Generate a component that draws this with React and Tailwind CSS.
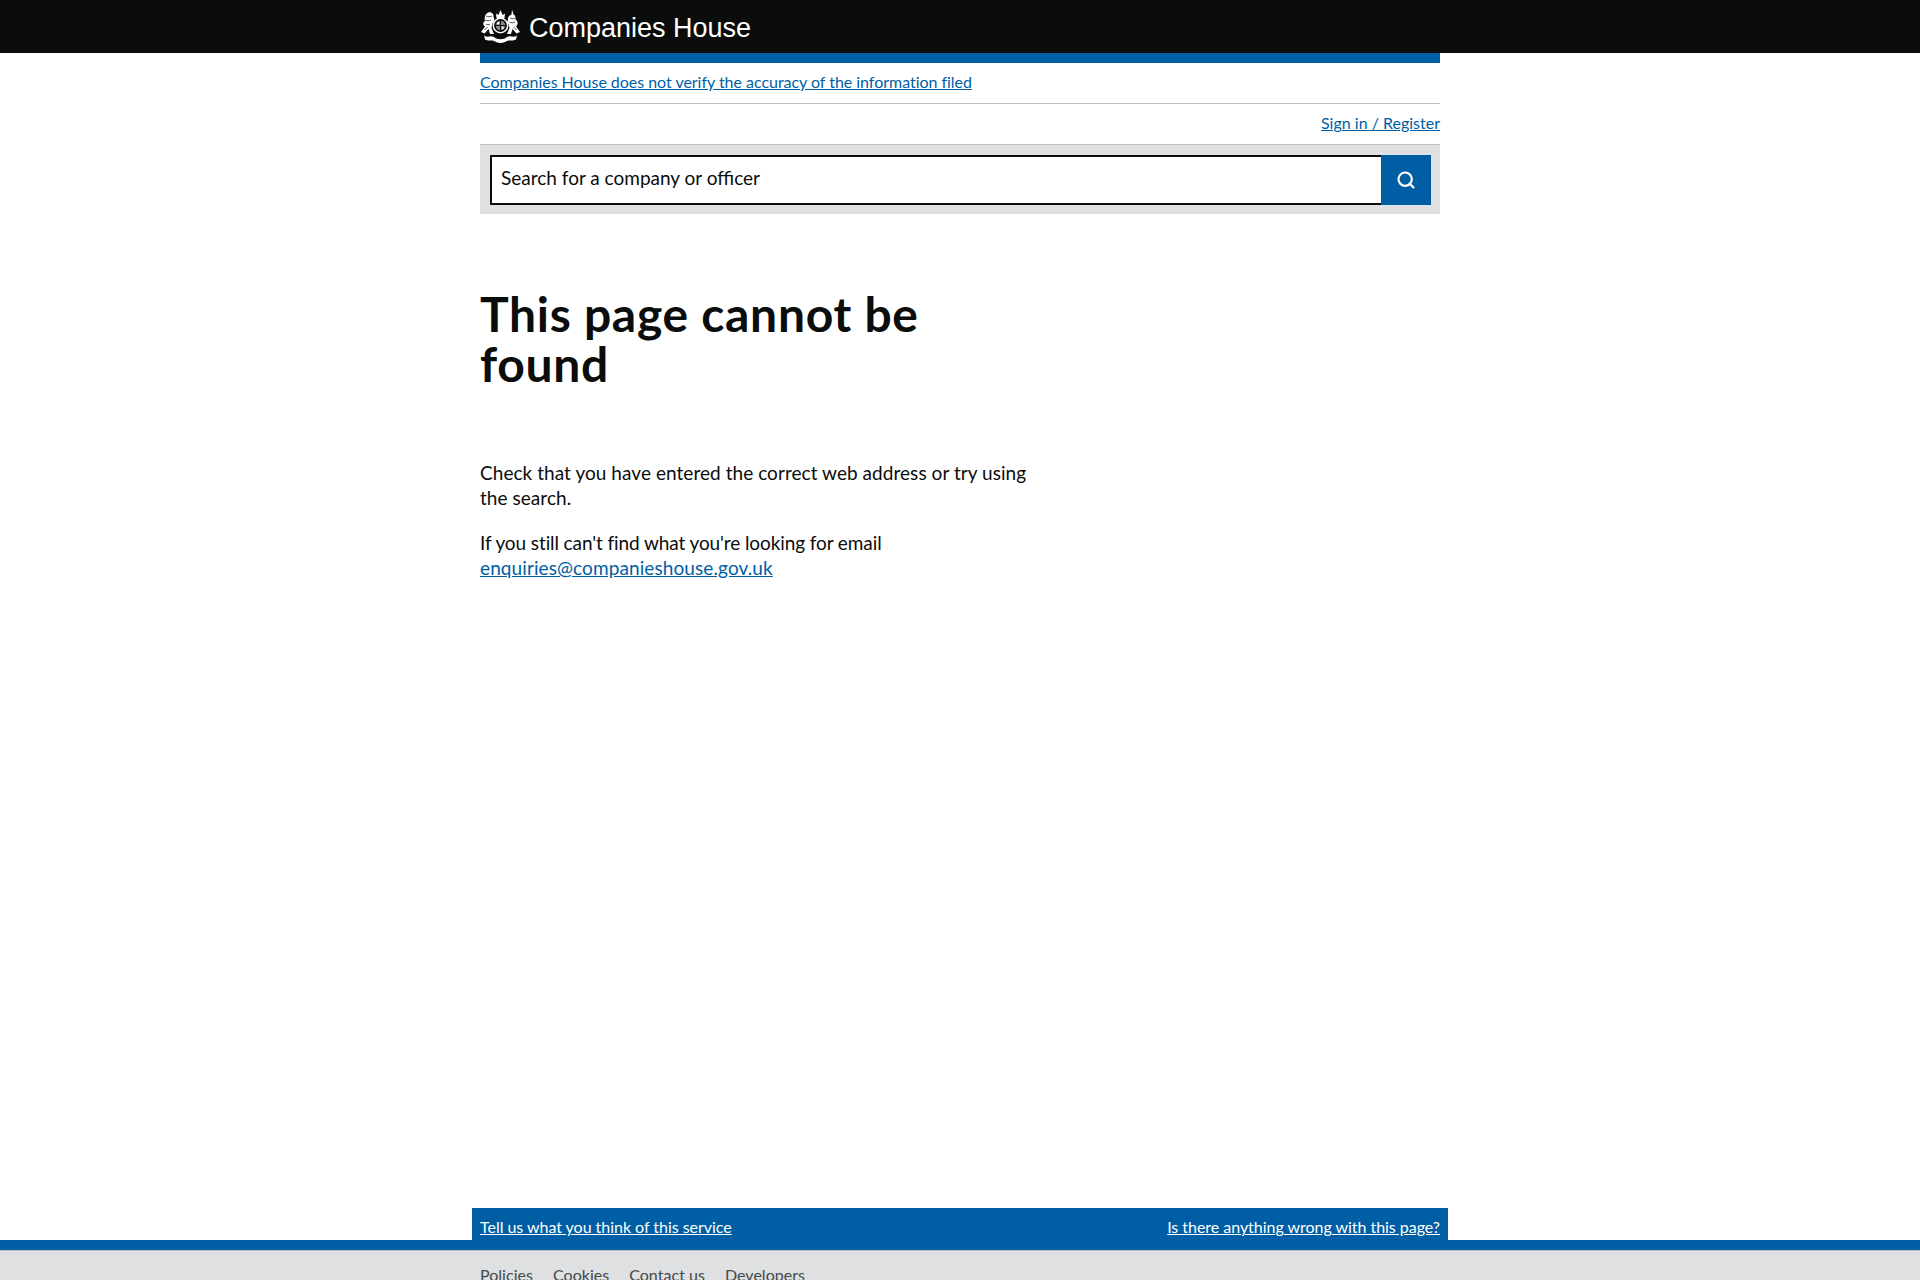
import { Search } from 'lucide-react';

function Crest() {
  return (
    <svg width="41" height="35" viewBox="0 0 41 35" fill="none" className="shrink-0">
      {/* crown */}
      <path d="M16.5 9 L16 4.5 L18.3 6 L20.5 1 L22.7 6 L25 4.5 L24.5 9 Z" fill="#fff" />
      {/* lion */}
      <path d="M8 3.5 C11 2.5 14 4.5 13.5 8 C15 10 14.5 13 12.5 14 L11.5 19 L14 25 L10 25 L8.5 20 L4.5 24.5 L1 23 L5 17.5 C2.5 15.5 3 13 5 12 C4 9 5 5 8 3.5 Z" fill="#fff" />
      <path d="M6 7 C8 8 10 8 12 7 M5 11 C7 12 9 12 11 11 M6 15 C7 16 9 16 10 15 M4.5 21 L7.5 18" stroke="#0b0c0c" strokeWidth="0.7" />
      {/* unicorn */}
      <path d="M32 0.5 L31.5 5.5 C29 6.5 27.5 8.5 28 11 C26.5 13 27 14.5 28.5 15 L29.5 19 L27 25 L31 25 L32.5 20 L36.5 24.5 L40 23 L36 17.5 C38.5 15 38 12 35.5 10.5 C36 8 35 6 33.5 5.5 Z" fill="#fff" />
      <path d="M30 9 C32 10 34 10 35.5 9 M29.5 13 C31.5 14 33.5 14 35 13 M36.5 21 L33.5 18" stroke="#0b0c0c" strokeWidth="0.7" />
      {/* shield */}
      <circle cx="20.5" cy="16.5" r="7.2" fill="#0b0c0c" stroke="#fff" strokeWidth="1.5" />
      <circle cx="20.5" cy="16.5" r="4.8" fill="#8a8c8c" />
      <path d="M20.5 11.5 V21.5 M15.5 16.5 H25.5" stroke="#0b0c0c" strokeWidth="1" />
      <circle cx="18.2" cy="14.2" r="1.1" fill="#fff" />
      <circle cx="22.8" cy="18.8" r="1.1" fill="#fff" />
      {/* motto scroll */}
      <path d="M4 26.5 C8 29.5 10 25.5 14 28 C17 31 24 31 27 28 C31 25.5 33 29.5 37 26.5 L36 30.5 C32 32.5 30 30.5 27 32 C23 34.5 18 34.5 14 32 C11 30.5 9 32.5 5 30.5 Z" fill="#fff" />
    </svg>
  );
}

export default function App() {
  return (
    <div className="h-[1280px] overflow-hidden bg-white font-['Lato','Noto_Sans',sans-serif] text-[#0b0c0c]">
      <header className="h-[53px] bg-[#0b0c0c]">
        <div className="mx-auto flex h-full w-[960px] items-center gap-2">
          <Crest />
          <span className="pt-[3px] font-['Liberation_Sans',Arial,sans-serif] text-[27px] leading-none text-white">Companies House</span>
        </div>
      </header>

      <div className="mx-auto w-[960px]">
        <div className="h-[10px] bg-[#005ea5]" />
        <div className="flex h-[41px] items-center border-b border-[#bfc1c3] pb-[2px] text-[16px] tracking-[-0.03px]">
          <a href="#" className="text-[#005ea5] underline">Companies House does not verify the accuracy of the information filed</a>
        </div>
        <div className="flex h-[40px] items-center justify-end pb-[2px] text-[16px]">
          <a href="#" className="text-[#005ea5] underline">Sign in / Register</a>
        </div>
        <form className="flex h-[70px] items-center border-t border-[#bfc1c3] bg-[#dee0e2] pl-[10px] pr-[9px]">
          <div className="flex h-[50px] flex-1 items-center border-2 border-r-0 border-[#0b0c0c] bg-white pl-[9px] pb-[2px] text-[19px]">
            Search for a company or officer
          </div>
          <button type="button" className="flex h-[50px] w-[50px] items-center justify-center bg-[#005ea5]">
            <Search size={20} strokeWidth={2.6} className="text-white" />
          </button>
        </form>

        <main className="w-[570px] pt-[75px]">
          <h1 className="w-[500px] text-[48px] font-bold leading-[50px] tracking-[0.7px]">This page cannot be found</h1>
          <p className="mt-[71px] text-[19px] leading-[25px] tracking-[0.05px]">Check that you have entered the correct web address or try using the search.</p>
          <p className="mt-[20px] text-[19px] leading-[25px] tracking-[-0.1px]">
            If you still can't find what you're looking for email
            <br />
            <a href="#" className="tracking-[0.1px] text-[#005ea5] underline">enquiries@companieshouse.gov.uk</a>
          </p>
        </main>
      </div>

      <footer className="mt-[628px]">
        <div className="mx-auto flex h-[32px] w-[976px] items-center justify-between bg-[#005ea5] px-[8px] pt-[6px] text-[16px] tracking-[-0.03px] text-white">
          <a href="#" className="underline">Tell us what you think of this service</a>
          <a href="#" className="underline">Is there anything wrong with this page?</a>
        </div>
        <div className="h-[10px] bg-[#005ea5]" />
        <div className="h-[200px] border-t border-[#bfc1c3] bg-[#dee0e2]">
          <nav className="mx-auto flex w-[960px] gap-5 pt-[14px] text-[16px] leading-[20px] tracking-[0.03px] text-[#454a4c]">
            <a href="#">Policies</a>
            <a href="#">Cookies</a>
            <a href="#">Contact us</a>
            <a href="#">Developers</a>
          </nav>
        </div>
      </footer>
    </div>
  );
}
